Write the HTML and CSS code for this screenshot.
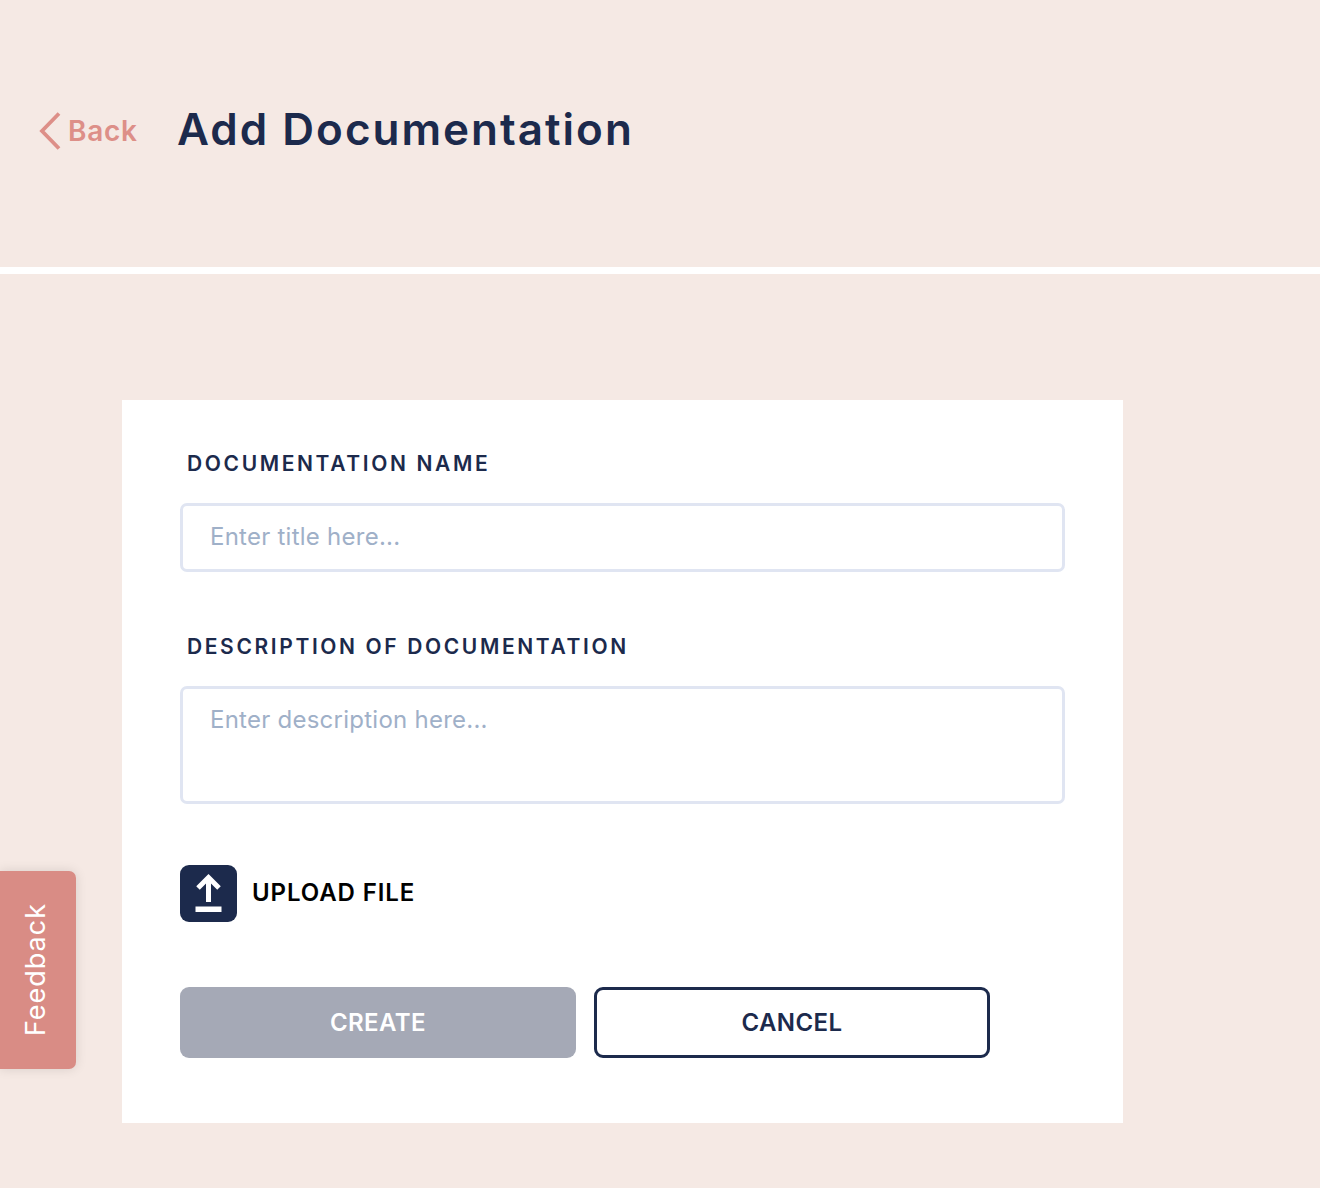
FILE: index.html
```html
<!DOCTYPE html>
<html lang="en">
<head>
<meta charset="utf-8">
<title>Add Documentation</title>
<link rel="stylesheet" href="styles.css">
</head>
<body>
<header class="header">
  <a class="back" href="#">
    <svg class="back-icon" width="24" height="38" viewBox="0 0 24 38" aria-hidden="true"><path d="M21 1.5 L4 19 L21 36.5" fill="none" stroke="#dd8f88" stroke-width="3.8"/></svg>
    <span>Back</span>
  </a>
  <h1 class="title">Add Documentation</h1>
</header>
<main class="main">
  <form class="card">
    <label class="label label-first">DOCUMENTATION NAME</label>
    <div class="field field-input">Enter title here...</div>
    <label class="label label-second">DESCRIPTION OF DOCUMENTATION</label>
    <div class="field field-area">Enter description here...</div>
    <div class="upload">
      <span class="upload-icon">
        <svg width="57" height="57" viewBox="0 0 57 57" aria-hidden="true">
          <path d="M28.5 12 V37" fill="none" stroke="#fff" stroke-width="5"/>
          <path d="M18 23 L28.5 12.5 L39 23" fill="none" stroke="#fff" stroke-width="5"/>
          <rect x="15.5" y="41.5" width="26" height="5.5" fill="#fff"/>
        </svg>
      </span>
      <span class="upload-text">UPLOAD FILE</span>
    </div>
    <div class="actions">
      <button class="btn btn-create" type="button">CREATE</button>
      <button class="btn btn-cancel" type="button">CANCEL</button>
    </div>
  </form>
</main>
<div class="feedback"><span class="feedback-text">Feedback</span></div>
</body>
</html>
```
FILE: styles.css
```css
* { box-sizing: border-box; }
html, body { margin: 0; height: 1188px; overflow: hidden; }
body { background: #f5e9e4; font-family: "Inter", "Open Sans", sans-serif; color: #1c2a4c; }
.header { height: 274px; border-bottom: 7px solid #fff; display: flex; align-items: flex-start; padding: 103px 0 0 38px; }
.back { display: flex; align-items: center; width: 139px; height: 52px; padding-top: 4px; color: #dd8f88; font-size: 28px; font-weight: 600; text-decoration: none; letter-spacing: 0.7px; }
.back-icon { margin-right: 6px; flex: none; }
.title { margin: 0; font-size: 44px; line-height: 52px; font-weight: 600; letter-spacing: 2px; white-space: nowrap; }
.main { padding: 126px 0 0 122px; }
.card { width: 1001px; height: 723px; background: #fff; padding: 49px 58px 0; }
.label { display: block; height: 30px; line-height: 30px; margin-left: 7px; font-size: 21px; font-weight: 600; letter-spacing: 2.62px; white-space: nowrap; }
.label-second { margin-top: 60px; }
.field { width: 885px; margin-top: 24px; border: 3px solid #e0e5f2; border-radius: 7px; padding: 0 27px; color: #9fb0c8; font-size: 24px; letter-spacing: 0.25px; }
.field-input { height: 69px; line-height: 62px; }
.field-area { height: 118px; line-height: 61px; }
.upload { display: flex; align-items: center; margin-top: 61px; gap: 15px; }
.upload-icon { width: 57px; height: 57px; border-radius: 9px; background: #1c2a4c; display: block; }
.upload-icon svg { display: block; }
.upload-text { color: #000; font-size: 24px; font-weight: 600; letter-spacing: 0.9px; white-space: nowrap; position: relative; top: -1px; }
.actions { display: flex; gap: 18px; margin-top: 65px; }
.btn { width: 396px; height: 71px; border-radius: 9px; font-family: inherit; font-size: 24px; font-weight: 600; letter-spacing: 0.4px; padding: 0; }
.btn-create { background: #a5a9b6; color: #fff; border: 0; }
.btn-cancel { background: #fff; color: #1c2a4c; border: 3px solid #1c2a4c; }
.feedback { position: absolute; left: 0; top: 871px; width: 76px; height: 198px; background: #d98c85; border-radius: 0 7px 7px 0; box-shadow: 0 0 12px rgba(0,0,0,.12); display: flex; align-items: center; justify-content: center; }
.feedback-text { writing-mode: vertical-rl; transform: rotate(180deg); color: #fff; font-size: 27px; font-weight: 400; letter-spacing: 1px; margin-right: 5px; }
```
